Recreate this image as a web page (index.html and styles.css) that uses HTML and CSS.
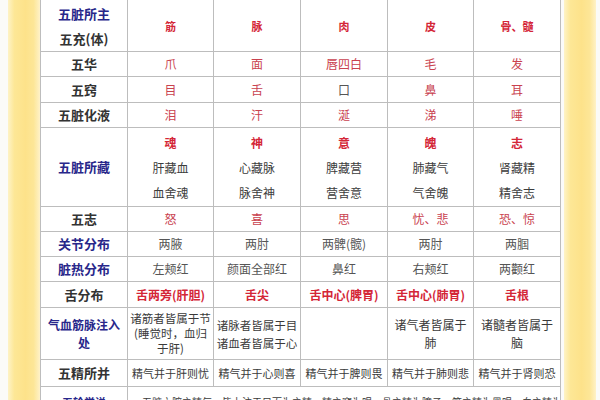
FILE: index.html
```html
<!DOCTYPE html>
<html lang="zh">
<head>
<meta charset="utf-8">
<link rel="stylesheet" href="styles.css">
</head>
<body>
<div class="page">
  <div class="edge-l"></div>
  <div class="band"></div>
  <table class="tcm">
    <colgroup>
      <col class="c87"><col class="c86"><col class="c87"><col class="c87"><col class="c86"><col class="c87">
    </colgroup>
    <tr class="r-main">
      <th><span class="blue">五脏所主</span><br>五充(体)</th>
      <td class="red b sm">筋</td><td class="red b sm">脉</td><td class="red b sm">肉</td><td class="red b sm">皮</td><td class="red b sm">骨、髓</td>
    </tr>
    <tr class="r25">
      <th>五华</th>
      <td class="pink">爪</td><td class="pink">面</td><td class="pink">唇四白</td><td class="pink">毛</td><td class="pink">发</td>
    </tr>
    <tr class="r26">
      <th>五窍</th>
      <td class="pink">目</td><td class="pink">舌</td><td class="gray">口</td><td class="pink">鼻</td><td class="pink">耳</td>
    </tr>
    <tr class="r25">
      <th>五脏化液</th>
      <td class="pink">泪</td><td class="pink">汗</td><td class="pink">涎</td><td class="pink">涕</td><td class="pink">唾</td>
    </tr>
    <tr class="r-store">
      <th class="blue">五脏所藏</th>
      <td class="stack"><span class="red b">魂</span><br>肝藏血<br>血舍魂</td>
      <td class="stack"><span class="red b">神</span><br>心藏脉<br>脉舍神</td>
      <td class="stack"><span class="red b">意</span><br>脾藏营<br>营舍意</td>
      <td class="stack"><span class="red b">魄</span><br>肺藏气<br>气舍魄</td>
      <td class="stack"><span class="red b">志</span><br>肾藏精<br>精舍志</td>
    </tr>
    <tr class="r25">
      <th>五志</th>
      <td class="pink">怒</td><td class="pink">喜</td><td class="pink">思</td><td class="pink">忧、悲</td><td class="pink">恐、惊</td>
    </tr>
    <tr class="r25">
      <th class="blue">关节分布</th>
      <td class="gray">两腋</td><td class="gray">两肘</td><td class="gray">两髀(髋)</td><td class="gray">两肘</td><td class="gray">两腘</td>
    </tr>
    <tr class="r25">
      <th class="blue">脏热分布</th>
      <td class="gray">左颊红</td><td class="gray">颜面全部红</td><td class="gray">鼻红</td><td class="gray">右颊红</td><td class="gray">两颧红</td>
    </tr>
    <tr class="r26">
      <th>舌分布</th>
      <td class="red b">舌两旁(肝胆)</td><td class="red b">舌尖</td><td class="red b">舌中心(脾胃)</td><td class="red b">舌中心(肺胃)</td><td class="red b">舌根</td>
    </tr>
    <tr class="r-flow">
      <th class="blue flow-h">气血筋脉注入<br>处</th>
      <td class="dark tight">诸筋者皆属于节<br>(睡觉时，血归<br>于肝)</td>
      <td class="dark two">诸脉者皆属于目<br>诸血者皆属于心</td>
      <td></td>
      <td class="dark lh18">诸气者皆属于<br>肺</td>
      <td class="dark lh18">诸髓者皆属于<br>脑</td>
    </tr>
    <tr class="r27">
      <th>五精所并</th>
      <td class="dark nar">精气并于肝则忧</td><td class="dark nar">精气并于心则喜</td><td class="dark nar">精气并于脾则畏</td><td class="dark nar">精气并于肺则悲</td><td class="dark nar">精气并于肾则恐</td>
    </tr>
    <tr class="r-last">
      <th class="blue last-h">五轮学说</th>
      <td colspan="5" class="dark last">五脏六腑之精气，皆上注于目而为之精。精之窠为眼，骨之精为瞳子，筋之精为黑眼，血之精为络，其窠气之精为白眼</td>
    </tr>
  </table>
  <div class="gap"></div>
  <div class="band"></div>
  <div class="edge-r"></div>
</div>
</body>
</html>
```

FILE: styles.css
```css
html, body {
  margin: 0;
  padding: 0;
  background: #fdfdfb;
}
body {
  width: 600px;
  height: 400px;
  overflow: hidden;
  font-family: "Noto Sans CJK SC", "Noto Sans", sans-serif;
}
.page {
  display: flex;
  align-items: flex-start;
  height: 400px;
  overflow: hidden;
}
.edge-l { width: 8px; flex: none; height: 400px; background: #fbfbf8; }
.edge-r { width: 5px; flex: none; height: 400px; background: #fbfbf8; }
.gap { width: 3px; flex: none; height: 400px; background: #fbfbfa; }
.band {
  width: 32px;
  flex: none;
  height: 400px;
  background: linear-gradient(to right, #fef3c6 0%, #fde796 20%, #fde28a 55%, #fde697 80%, #fff2c8 100%);
}
.tcm {
  flex: none;
  width: 520px;
  table-layout: fixed;
  border-collapse: collapse;
  background: #ffffff;
  margin-top: -1px;
}
.c87 { width: 87px; }
.c86 { width: 86px; }
.tcm th, .tcm td {
  border: 1px solid #bdbdbd;
  padding: 0;
  text-align: center;
  vertical-align: middle;
  white-space: nowrap;
  font-size: 12px;
  line-height: 16px;
  color: #4a4a4a;
  overflow: hidden;
}
.tcm th {
  font-size: 13px;
  font-weight: 700;
  color: #333333;
}
.tcm tr.r-main th { line-height: 25px; }
.tcm .blue { color: #28278a; }
.tcm .red { color: #d42637; }
.tcm .pink { color: #c9424f; }
.tcm .gray { color: #555555; }
.tcm .dark { color: #3a3a3a; }
.tcm .b { font-weight: 700; }
.tcm .sm { font-size: 11px; }
.tcm .stack { line-height: 25px; color: #3c3c3c; }
.tcm .flow-h { font-size: 12px; line-height: 18px; }
.tcm .lh18 { line-height: 18px; }
.tcm .tight { font-size: 11.5px; line-height: 15px; padding-top: 3px; vertical-align: top; }
.tcm .two { font-size: 11.5px; line-height: 18px; }
.tcm .nar { font-size: 11px; letter-spacing: 0; }
.r-main { height: 52px; }
.r25 { height: 25px; }
.r26 { height: 26px; }
.r27 { height: 27px; }
.r-store { height: 79px; }
.r-flow { height: 52px; }
.r-last { height: 40px; }
.tcm .last-h { font-size: 11px; vertical-align: top; padding-top: 7px; }
.tcm .last {
  font-size: 10px;
  line-height: 12px;
  text-align: left;
  vertical-align: top;
  padding: 9px 4px 0 14px;
}
```
